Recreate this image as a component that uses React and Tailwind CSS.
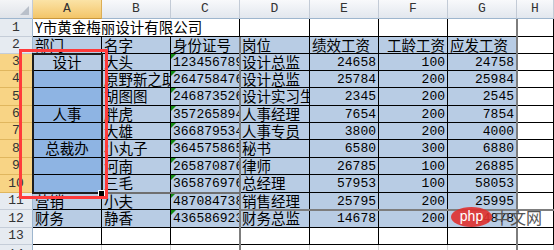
import React from 'react'

const COLS = ['A', 'B', 'C', 'D', 'E', 'F', 'G', 'H']

// rows 2-12 of the sheet, columns A-G
const data = [
  ['部门', '名字', '身份证号', '岗位', '绩效工资', '工龄工资', '应发工资'],
  ['设计', '大头', '123456789012345678', '设计总监', '24658', '100', '24758'],
  ['', '原野新之助', '264758476123456789', '设计总监', '25784', '200', '25984'],
  ['', '胡图图', '246873526987654321', '设计实习生', '2345', '200', '2545'],
  ['人事', '胖虎', '357265894512345678', '人事经理', '7654', '200', '7854'],
  ['', '大雄', '366879534687654321', '人事专员', '3800', '200', '4000'],
  ['总裁办', '小丸子', '364575865312345678', '秘书', '6580', '300', '6880'],
  ['', '河南', '265870876198765432', '律师', '26785', '100', '26885'],
  ['', '三毛', '365876976412345678', '总经理', '57953', '100', '58053'],
  ['营销', '小夫', '487084738598765432', '销售经理', '25795', '200', '25995'],
  ['财务', '静香', '436586923712345678', '财务总监', '14678', '200', '14878'],
]

const cjk = "font-['Noto_Sans_CJK_SC',sans-serif] text-[14.5px]"
const mono = "font-['Liberation_Mono','Noto_Sans_CJK_SC',monospace] text-[13px]"
const cellBase = 'relative flex items-center overflow-hidden whitespace-nowrap border-r border-b leading-none text-black'

const ColHeader = ({ label, selected }) => (
  <div
    className={`flex items-center justify-center border-r border-b font-['Liberation_Mono',monospace] text-[13px] text-[#333] ${
      selected
        ? 'bg-linear-to-b from-[#fbe3a6] to-[#f3c567] border-r-[#dcae55] border-b-[#c8963c]'
        : 'bg-linear-to-b from-[#f8f9fb] to-[#e2e7ee] border-r-[#c3cbd6] border-b-[#9eb6ce]'
    }`}
  >
    {label}
  </div>
)

const RowHeader = ({ n, selected }) => (
  <div
    className={`flex items-center justify-center border-r border-b font-['Liberation_Mono',monospace] text-[13px] text-[#333] ${
      selected
        ? 'bg-[#f8d485] border-r-[#c8963c] border-b-[#e0b65e]'
        : 'bg-[#e6ebf1] border-r-[#9eb6ce] border-b-[#c5cdd8]'
    }`}
  >
    {n}
  </div>
)

const Cell = ({ children, align = 'left', font = cjk, fill = 'bg-white', line = 'border-black', tri, span }) => (
  <div
    className={`${cellBase} ${font} ${fill} ${line} ${span ? 'col-span-3' : ''} ${
      align === 'right' ? 'justify-end pr-[2px]' : align === 'center' ? 'justify-center' : 'pl-[2px]'
    }`}
  >
    {tri && (
      <span className="absolute top-0 left-0 h-0 w-0 border-t-[5px] border-t-[#128a12] border-r-[5px] border-r-transparent" />
    )}
    {children}
  </div>
)

export default function App() {
  return (
    <div className="relative h-[250px] w-[554px] overflow-hidden bg-white">
      <div className="grid grid-cols-[33px_69px_69px_69px_70px_69px_69px_69px_1fr] grid-rows-[19px_18px_17px_17px_17px_18px_17px_17px_18px_17px_18px_17px_18px_17px_20px]">
        {/* header row */}
        <div className="relative border-r border-b border-r-[#c3cbd6] border-b-[#9eb6ce] bg-linear-to-b from-[#f4f5f7] to-[#dfe3e9]">
          <span className="absolute right-[3px] bottom-[3px] h-0 w-0 border-b-[9px] border-b-[#b9c0ca] border-l-[9px] border-l-transparent" />
        </div>
        {COLS.map((c) => (
          <ColHeader key={c} label={c} selected={c === 'A'} />
        ))}

        {/* row 1 */}
        <RowHeader n={1} />
        <Cell span>Y市黄金梅丽设计有限公司</Cell>
        <Cell />
        <Cell />
        <Cell />
        <Cell />
        <Cell />

        {/* rows 2-12 */}
        {data.map((row, i) => {
          const r = i + 2
          const sel = r >= 3 && r <= 10
          return (
            <React.Fragment key={r}>
              <RowHeader n={r} selected={sel} />
              {row.map((v, j) => {
                const isNum = j >= 4 && r > 2
                let fill = 'bg-[#b8cce4]'
                if (j === 0 && r >= 4 && r <= 10) fill = 'bg-[#8eb4e3]'
                let align = 'left'
                if (isNum) align = 'right'
                if (r === 2 && j === 5) align = 'right'
                if (j === 0 && sel) align = 'center'
                return (
                  <Cell
                    key={j}
                    fill={fill}
                    align={align}
                    font={(j === 2 && r > 2) || isNum ? mono : cjk}
                    tri={j === 2 && r > 2}
                  >
                    {v}
                  </Cell>
                )
              })}
              <Cell />
            </React.Fragment>
          )
        })}

        {/* row 13 */}
        <RowHeader n={13} />
        {COLS.map((c) => (
          <Cell key={c} />
        ))}

        {/* row 14 (partly visible) */}
        <RowHeader n={14} />
        {COLS.map((c) => (
          <Cell key={c} line="border-[#d4d4d4]" />
        ))}
      </div>

      {/* page break lines */}
      <div className="absolute top-[37px] left-[239px] h-[213px] w-[2px] bg-[#7d7d7d]" />
      <div className="absolute top-[19px] left-[516px] h-[231px] w-[2px] bg-[#7d7d7d]" />
      <div className="absolute top-[192px] left-[33px] h-[2px] w-[207px] bg-[#6f6f6f]" />
      <div className="absolute top-[209px] left-[240px] h-[2px] w-[314px] bg-[#7d7d7d]" />

      {/* selection A3:A10 */}
      <div className="absolute top-[53px] left-[32px] h-[141px] w-[71px] border-2 border-[#1d1d1d]" />
      <div className="absolute top-[190px] left-[98px] h-[7px] w-[7px] border border-white bg-black" />

      {/* red annotation box */}
      <div className="absolute top-[49px] left-[19px] h-[150px] w-[89px] border-[3px] border-[#ff3b3b]" />

      {/* watermark */}
      <div className="absolute top-[207px] left-[451px] flex items-center">
        <div className="flex h-[20px] w-[41px] items-center justify-center rounded-[50%] bg-[#e0302d]/90 pb-[2px] font-['Liberation_Sans',sans-serif] text-[14px] text-white">
          php
        </div>
        <span className="ml-[2px] font-['Noto_Sans_CJK_SC',sans-serif] text-[16px] leading-none text-[#555]">中文网</span>
      </div>
    </div>
  )
}
